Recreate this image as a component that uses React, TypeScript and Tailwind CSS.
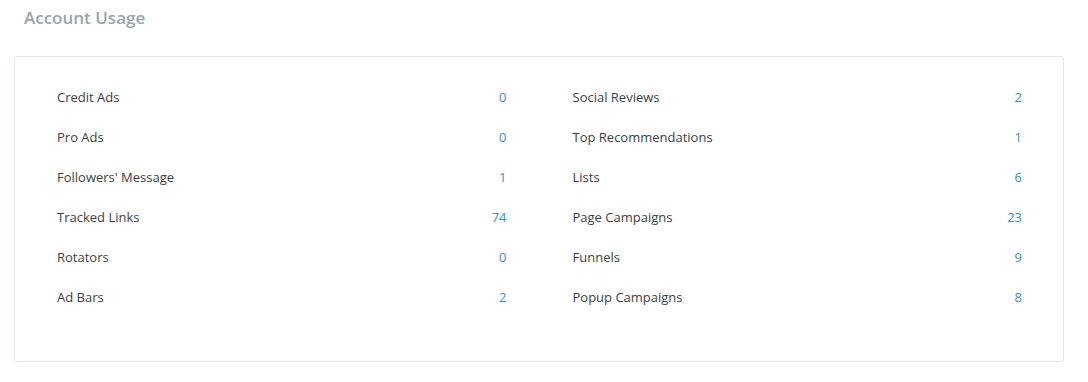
import React from "react";

const left = [
  ["Credit Ads", "0"],
  ["Pro Ads", "0"],
  ["Followers' Message", "1"],
  ["Tracked Links", "74"],
  ["Rotators", "0"],
  ["Ad Bars", "2"],
];

const right = [
  ["Social Reviews", "2"],
  ["Top Recommendations", "1"],
  ["Lists", "6"],
  ["Page Campaigns", "23"],
  ["Funnels", "9"],
  ["Popup Campaigns", "8"],
];

const Column = ({ rows }: { rows: string[][] }) => (
  <div className="flex flex-col">
    {rows.map(([label, value]) => (
      <div key={label} className="flex h-10 items-center justify-between">
        <span className="text-[#3a3f44]">{label}</span>
        <span className="text-[#3b8ccb]">{value}</span>
      </div>
    ))}
  </div>
);

export default function App() {
  return (
    <div
      className="h-[382px] w-[1088px] bg-white text-[13px]"
      style={{ fontFamily: '"Open Sans", "Noto Sans", sans-serif' }}
    >
      <h2 className="px-6 pt-[5px] text-[17px] font-semibold leading-[26px] text-[#98a6ad]">
        Account Usage
      </h2>
      <div className="ml-[14px] mt-[25px] w-[1050px] rounded-[3px] border border-[#e3e6ea] pb-[43px] pl-[42px] pr-[41px] pt-[21px]">
        <div className="grid grid-cols-2 gap-x-[66px]">
          <Column rows={left} />
          <Column rows={right} />
        </div>
      </div>
    </div>
  );
}
